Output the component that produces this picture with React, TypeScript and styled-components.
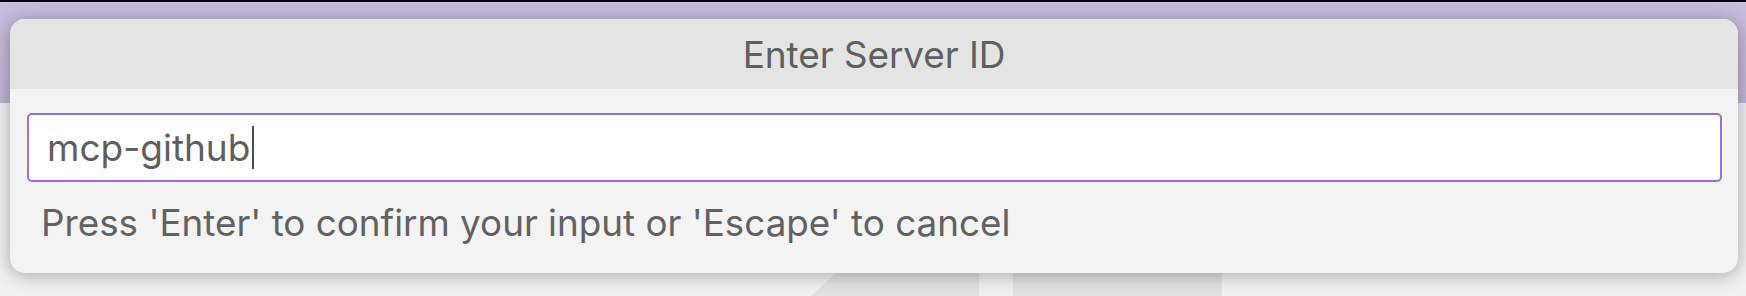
import React from 'react';
import styled, { createGlobalStyle } from 'styled-components';

const GlobalStyle = createGlobalStyle`
  html, body {
    margin: 0;
    padding: 0;
    background: #efefef;
  }
  body {
    font-family: Inter, "Noto Sans", "Liberation Sans", sans-serif;
    -webkit-font-smoothing: antialiased;
  }
`;

const Stage = styled.div`
  position: relative;
  width: 1746px;
  height: 296px;
  overflow: hidden;
  display: flex;
  flex-direction: column;
`;

const TitleBar = styled.div`
  height: 101px;
  flex: none;
  border-top: 2px solid #000;
  background: linear-gradient(180deg, #c8bedc 0%, #c0b4d6 100%);
`;

const Workbench = styled.div`
  flex: 1;
  display: flex;
  background: #f1f1f1;
`;

// panels of the editor area that peek out below the dialog
const Panel = styled.div<{ $w: number; $dark?: boolean; $slant?: boolean }>`
  width: ${(p) => p.$w}px;
  flex: none;
  background: ${(p) => (p.$dark ? '#e2e2e2' : 'transparent')};
  ${(p) => (p.$slant ? 'clip-path: polygon(25px calc(100% - 23px), 100% calc(100% - 23px), 100% 100%, 0 100%, 0 100%);' : '')}
`;

const Dialog = styled.div`
  position: absolute;
  top: 19px;
  left: 10px;
  width: 1728px;
  height: 254px;
  border-radius: 15px;
  overflow: hidden;
  background: #f3f3f3;
  box-shadow: 0 2px 18px rgba(0, 0, 0, 0.32);
  display: flex;
  flex-direction: column;
`;

const Header = styled.div`
  height: 70px;
  flex: none;
  background: #e4e4e4;
  display: flex;
  align-items: center;
  justify-content: center;
  font-size: 37px;
  color: #5f5f5f;
  letter-spacing: -0.1px;
`;

const Body = styled.div`
  flex: 1;
  display: flex;
  flex-direction: column;
  padding: 24px 16px 0 17px;
`;

const InputBox = styled.div`
  height: 69px;
  box-sizing: border-box;
  border: 2px solid #9a6ddb;
  border-radius: 5px;
  background: #fff;
  display: flex;
  align-items: center;
  padding: 0 0 0 18px;
  font-size: 37px;
  color: #5f5f5f;
`;

const Caret = styled.span`
  display: inline-block;
  width: 2px;
  height: 43px;
  margin-left: 2px;
  background: #4a4a4a;
`;

const Hint = styled.div`
  margin-top: 19px;
  padding-left: 14px;
  font-size: 36.8px;
  line-height: 44px;
  color: #616161;
`;

export default function App() {
  return (
    <>
      <GlobalStyle />
      <Stage>
        <TitleBar />
        <Workbench>
          <Panel $w={811} />
          <Panel $w={168} $dark $slant />
          <Panel $w={34} />
          <Panel $w={209} $dark />
        </Workbench>
        <Dialog>
          <Header>Enter Server ID</Header>
          <Body>
            <InputBox>
              mcp-github
              <Caret />
            </InputBox>
            <Hint>Press 'Enter' to confirm your input or 'Escape' to cancel</Hint>
          </Body>
        </Dialog>
      </Stage>
    </>
  );
}
